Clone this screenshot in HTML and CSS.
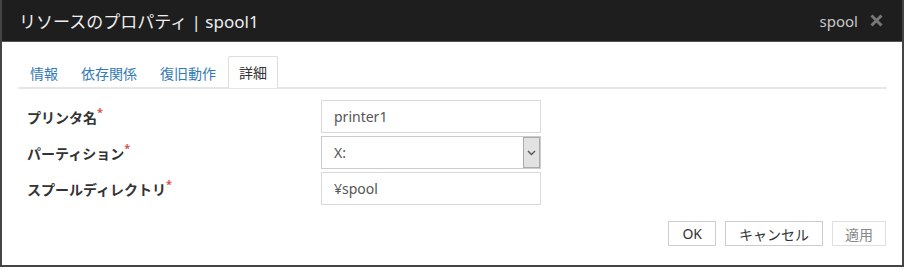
FILE: index.html
```html
<!DOCTYPE html>
<html lang="ja">
<head>
    <meta charset="UTF-8">
    <title>リソースのプロパティ | spool1</title>
    <link rel="stylesheet" href="styles.css">
</head>
<body>
    <div class="dialog">
        <div class="header">
            <span class="title">リソースのプロパティ | spool1</span>
            <span class="header-right">
                <span class="type">spool</span>
                <svg class="close" width="13" height="13" viewBox="0 0 13 13"><path d="M1.5 1.5 L11.5 11.5 M11.5 1.5 L1.5 11.5" stroke="#777" stroke-width="3"/></svg>
            </span>
        </div>
        <div class="content">
            <ul class="tabs">
                <li><a>情報</a></li>
                <li><a>依存関係</a></li>
                <li><a>復旧動作</a></li>
                <li class="active"><a>詳細</a></li>
            </ul>
            <div class="form">
                <div class="row">
                    <label>プリンタ名<span class="req">*</span></label>
                    <div class="field">printer1</div>
                </div>
                <div class="row">
                    <label>パーティション<span class="req">*</span></label>
                    <div class="field select">
                        <span>X:</span>
                        <span class="arrow">
                            <svg width="9" height="6" viewBox="0 0 9 6"><path d="M1 1 L4.5 4.5 L8 1" fill="none" stroke="#555" stroke-width="1.4"/></svg>
                        </span>
                    </div>
                </div>
                <div class="row">
                    <label>スプールディレクトリ<span class="req">*</span></label>
                    <div class="field">¥spool</div>
                </div>
            </div>
            <div class="buttons">
                <button class="btn">OK</button>
                <button class="btn">キャンセル</button>
                <button class="btn disabled">適用</button>
            </div>
        </div>
    </div>
</body>
</html>
```

FILE: styles.css
```css
body {
    margin: 0;
    padding: 0;
    background-color: #fff;
    font-family: "Noto Sans", "Noto Sans CJK JP", sans-serif;
}
.dialog {
    width: 900px;
    height: 265px;
    border: 2px solid #444;
    border-top: 0;
    background-color: #fff;
}
.header {
    height: 42px;
    background-color: #1e1e1e;
    border-bottom: 1px solid #555;
    box-sizing: border-box;
    display: flex;
    align-items: center;
    justify-content: space-between;
    padding: 0 19px 0 17px;
    color: #eee;
}
.title {
    font-size: 17px;
}
.header-right {
    display: flex;
    align-items: center;
    gap: 12px;
}
.type {
    font-size: 15px;
    color: #c8c8c8;
}
.close {
    display: block;
}
.content {
    padding: 15px 15px 0 16px;
}
.tabs {
    list-style: none;
    margin: 0;
    padding: 0 0 0 1px;
    display: flex;
    gap: 1px;
    border-bottom: 2px solid #e6e6e6;
    height: 30px;
}
.tabs li {
    margin-bottom: -2px;
}
.tabs a {
    display: block;
    height: 30px;
    line-height: 31px;
    padding: 0 10px;
    font-size: 14px;
    color: #337ab7;
    border: 1px solid transparent;
    border-bottom: 0;
    border-radius: 2px 2px 0 0;
}
.tabs .active a {
    color: #333;
    background-color: #fff;
    border-color: #ddd;
    height: 32px;
    line-height: 32px;
    box-sizing: border-box;
    margin-top: -1px;
}
.form {
    padding-top: 11px;
}
.row {
    display: flex;
    align-items: center;
    height: 33px;
    margin-bottom: 3px;
}
.row label {
    width: 294px;
    padding-left: 9px;
    font-size: 14px;
    font-weight: bold;
    color: #333;
}
.req {
    color: #d9534f;
    font-size: 11px;
    vertical-align: top;
    position: relative;
    top: -3px;
}
.field {
    width: 220px;
    height: 33px;
    box-sizing: border-box;
    border: 1px solid #d9d9d9;
    padding: 0 12px;
    font-size: 14px;
    color: #555;
    line-height: 31px;
}
.select {
    display: flex;
    justify-content: space-between;
    padding-right: 0;
    border-color: #ccc;
}
.arrow {
    width: 17px;
    height: 31px;
    box-sizing: border-box;
    background-color: #e2e2e2;
    border: 1px solid #aaa;
    display: flex;
    align-items: center;
    justify-content: center;
}
.buttons {
    display: flex;
    justify-content: flex-end;
    gap: 9px;
    margin-top: 16px;
    padding-right: 1px;
}
.btn {
    height: 25px;
    padding: 0 13px;
    font-family: "Noto Sans", "Noto Sans CJK JP", sans-serif;
    font-size: 14px;
    color: #333;
    background-color: #fff;
    border: 1px solid #ccc;
    border-radius: 0;
}
.btn.disabled {
    color: #888;
    border-color: #e0e0e0;
    padding: 0 12px;
}
```
